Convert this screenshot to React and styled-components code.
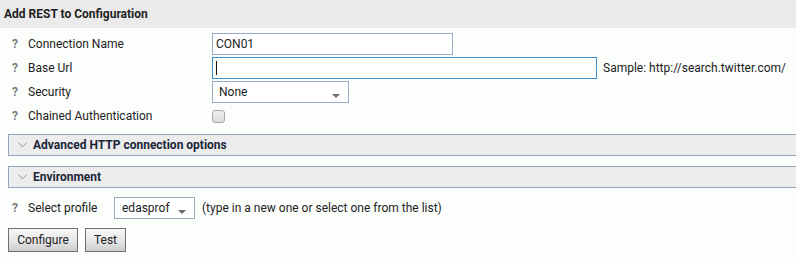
import React from "react";
import styled, { createGlobalStyle } from "styled-components";

const GlobalStyle = createGlobalStyle`
  html, body {
    margin: 0;
    padding: 0;
    background: #fcfefc;
  }
  body {
    font-family: Roboto, "Liberation Sans", Arial, sans-serif;
    font-size: 12px;
    color: #222;
  }
`;

const Page = styled.div`
  width: 796px;
  height: 263px;
  overflow: hidden;
  background: #fcfefc;
`;

const Header = styled.div`
  height: 28px;
  line-height: 29px;
  padding-left: 4px;
  background: #ebebeb;
  font-weight: 700;
  color: #1e1e1e;
`;

const Form = styled.div`
  padding-top: 4px;
`;

const Row = styled.div`
  display: flex;
  align-items: center;
  height: 24px;
  white-space: nowrap;
`;

const Help = styled.span`
  width: 16px;
  padding-left: 12px;
  flex: none;
  color: #7a7a7a;
  font-weight: 700;
  font-size: 12px;
`;

const Label = styled.span`
  width: ${(p) => p.$width || 184}px;
  flex: none;
  color: #222;
`;

const Field = styled.span`
  position: relative;
  display: inline-flex;
`;

const TextInput = styled.input`
  box-sizing: border-box;
  width: ${(p) => p.$width}px;
  height: 22px;
  margin: 0;
  padding: 0 3px;
  border: 1px solid ${(p) => (p.$focused ? "#3b8dcc" : "#9aa9bd")};
  outline: none;
  background: #fff;
  font-family: inherit;
  font-size: 12px;
  color: #222;
`;

const Caret = styled.span`
  position: absolute;
  left: 4px;
  top: 4px;
  width: 1px;
  height: 14px;
  background: #111;
`;

const Hint = styled.span`
  margin-left: ${(p) => p.$gap || 6}px;
  color: #222;
`;

const Select = styled.div`
  box-sizing: border-box;
  position: relative;
  display: flex;
  align-items: center;
  flex: none;
  width: ${(p) => p.$width}px;
  height: 22px;
  padding-left: ${(p) => p.$pad || 6}px;
  border: 1px solid #9aa9bd;
  background: #fff;
  color: #222;
  &::after {
    content: "";
    position: absolute;
    right: 8px;
    top: 12px;
    border-left: 4px solid transparent;
    border-right: 4px solid transparent;
    border-top: 4px solid #6a6a6a;
  }
`;

const Check = styled.span`
  box-sizing: border-box;
  display: inline-block;
  width: 13px;
  height: 13px;
  border: 1px solid #a9a9a9;
  border-radius: 3px;
  background: linear-gradient(#eeeeee, #dcdcdc);
`;

const Section = styled.div`
  display: flex;
  align-items: center;
  box-sizing: border-box;
  height: 22px;
  margin: ${(p) => p.$top}px 0 0 8px;
  padding-left: 9px;
  border-top: 1px solid #94a5bf;
  border-bottom: 1px solid #94a5bf;
  border-left: 1px solid #94a5bf;
  background: #ececec;
  font-weight: 700;
  color: #1b2638;
`;

const Chevron = styled.svg`
  width: 9px;
  height: 6px;
  margin-right: 6px;
  flex: none;
`;

const ProfileRow = styled(Row)`
  margin-top: 8px;
`;

const Buttons = styled.div`
  display: flex;
  gap: 7px;
  padding: 8px 0 0 8px;
`;

const Button = styled.button`
  box-sizing: border-box;
  height: 24px;
  margin: 0;
  padding: 0 6px;
  border: 1px solid #6f6f6f;
  background: linear-gradient(#f7f7f7 0%, #e6e6e6 55%, #cdcdcd 100%);
  font-family: inherit;
  font-size: 12px;
  color: #222;
  cursor: pointer;
`;

const ChevronDown = () => (
  <Chevron viewBox="0 0 9 6">
    <path d="M0.5 0.8 L4.5 4.8 L8.5 0.8" fill="none" stroke="#8a8f98" strokeWidth="1" />
  </Chevron>
);

export default function App() {
  return (
    <Page>
      <GlobalStyle />
      <Header>Add REST to Configuration</Header>
      <Form>
        <Row>
          <Help>?</Help>
          <Label>Connection Name</Label>
          <TextInput $width={241} defaultValue="CON01" />
        </Row>
        <Row>
          <Help>?</Help>
          <Label>Base Url</Label>
          <Field>
            <TextInput $width={385} $focused defaultValue="" />
            <Caret />
          </Field>
          <Hint>Sample: http://search.twitter.com/</Hint>
        </Row>
        <Row>
          <Help>?</Help>
          <Label>Security</Label>
          <Select $width={137}>None</Select>
        </Row>
        <Row>
          <Help>?</Help>
          <Label>Chained Authentication</Label>
          <Check />
        </Row>
      </Form>
      <Section $top={6}>
        <ChevronDown />
        Advanced HTTP connection options
      </Section>
      <Section $top={10}>
        <ChevronDown />
        Environment
      </Section>
      <ProfileRow>
        <Help>?</Help>
        <Label $width={86}>Select profile</Label>
        <Select $width={81} $pad={7}>edasprof</Select>
        <Hint $gap={7}>(type in a new one or select one from the list)</Hint>
      </ProfileRow>
      <Buttons>
        <Button style={{ width: 70 }}>Configure</Button>
        <Button style={{ width: 41 }}>Test</Button>
      </Buttons>
    </Page>
  );
}
